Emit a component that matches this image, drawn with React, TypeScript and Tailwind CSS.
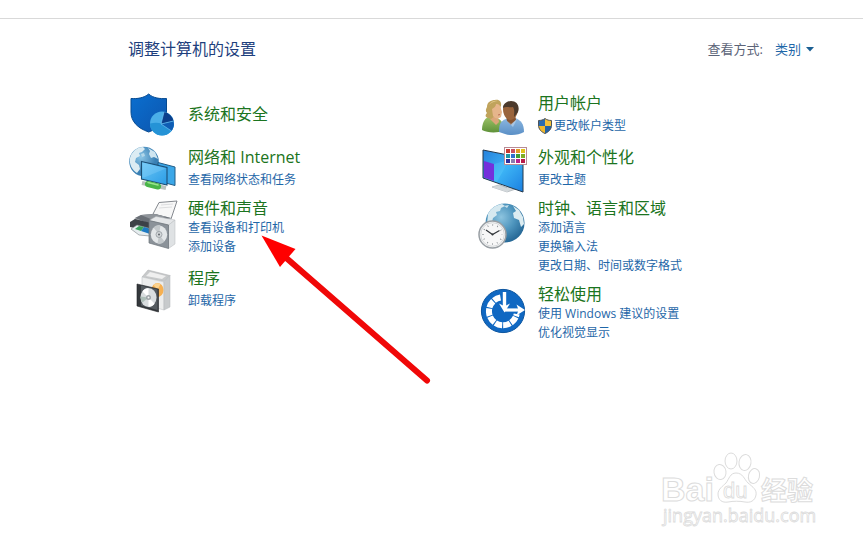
import type { ReactNode } from "react";

type Category = {
  title: string;
  icon: ReactNode;
  links?: { label: string; shield?: boolean }[];
};

const iconClass = "w-12 h-12 shrink-0 overflow-visible";

function SecurityIcon() {
  return (
    <svg viewBox="0 0 48 48" className={iconClass} aria-hidden="true">
      <defs>
        <linearGradient id="shield" x1="0" y1="0" x2="1" y2="1">
          <stop offset="0" stopColor="#0a6fd0" />
          <stop offset="1" stopColor="#0d55ad" />
        </linearGradient>
      </defs>
      <path d="M20.700 4C16 8 9 9 3 8.500V22c0 9 6 16 17.700 20C32 38 38.500 31 38.500 22V8.500C32 9 25 8 20.700 4Z" fill="url(#shield)" stroke="#064a90" />
      <circle cx="34" cy="33.500" r="12" fill="#4aaee8" />
      <path d="M22 33.500a12 12 0 0 0 24 0c-4 2-9 2.500-12 0-4-1-8-1-12 0Z" fill="#2593d6" />
      <path d="M33 34 36 22a12 12 0 0 1 9.500 9Z" fill="#0b3f8c" />
      <path d="M33 34 45.500 31a12 12 0 0 1-2 10Z" fill="#0f5db4" />
      <path d="M33 34 36 22M33 34l12.500-3M33 34l10.500 7" stroke="#6fc5f5" strokeWidth=".7" />
    </svg>
  );
}

function NetworkIcon() {
  return (
    <svg viewBox="0 0 48 48" className={iconClass} aria-hidden="true">
      <defs>
        <radialGradient id="net-globe" cx=".4" cy=".35">
          <stop offset="0" stopColor="#8cc6e6" />
          <stop offset="1" stopColor="#3a80b4" />
        </radialGradient>
        <linearGradient id="net-screen" x1="0" y1="0" x2="1" y2="1">
          <stop offset="0" stopColor="#6cc6f5" />
          <stop offset="1" stopColor="#2a9ce6" />
        </linearGradient>
      </defs>
      <circle cx="16" cy="17.500" r="14.800" fill="url(#net-globe)" />
      <path d="M3 11c3-5 7-8 12-8l2 2-3 3-3 1 1 3-4 2-1 4 4 3 1 4-3 4c-5-3-8-9-7-15Z" fill="#dcecf3" />
      <path d="m20 4 7 4 3 7-4-2-3 1-2-4 1-3Z" fill="#cfe5f0" />
      <path d="m13 10 3-1 1 3-3 1Z" fill="#b2d7e9" />
      <path d="m30 18.500 17 4.500v18.500L30 37Z" fill="#3ba7e8" stroke="#235d87" />
      <path d="m13.500 17.500 25.500 6V41l-25.500-6Z" fill="url(#net-screen)" stroke="#1c4e75" strokeWidth="1.100" />
      <path d="m14.500 18.500 23.500 6-22 9-1.500-.5Z" fill="#a5e1ff" opacity=".25" />
      <path d="m14 39 24 5" stroke="#b9c2bd" strokeWidth="4" />
      <path d="m20 40 10 2.500" stroke="#49b548" strokeWidth="6" strokeLinecap="round" />
      <path d="m20 38.500 10 2.500" stroke="#9be38c" strokeWidth="1.500" strokeLinecap="round" />
    </svg>
  );
}

function HardwareIcon() {
  return (
    <svg viewBox="0 0 48 48" className={iconClass} aria-hidden="true">
      <path d="m25 16 6-11.500L49 3l-6 18Z" fill="#f7f7f7" stroke="#777c82" strokeWidth=".9" />
      <path d="m33 7 12-1M31 10l13-1" stroke="#d4d6d8" strokeWidth=".8" />
      <path d="m7 20 6-3 14-1 16 4-2 10-20 2L2 29Z" fill="#b8bcc0" />
      <path d="m7 20 6-3 14-1 16 4-21 6Z" fill="#6b7077" />
      <path d="m13 17 14-1 12 3-14 3Z" fill="#90959b" />
      <path d="m2 24 5-3 16 4v8L2 29Z" fill="#3c4147" />
      <path d="m3 31 6-4 15 4-2 7-11-1Z" fill="#e6edf0" stroke="#777d82" strokeWidth=".6" />
      <path d="m7 31 4-3 5 1-3 4Z" fill="#3ba45c" />
      <path d="m13 33 3-4 7 2-1 5Z" fill="#1e7bc3" />
      <path d="m21 22.500 7-4 19 3.500-6 5Z" fill="#e4e6e8" stroke="#b5b9bc" strokeWidth=".5" />
      <path d="m40.500 27 6.500-5v24l-6.500 4.500Z" fill="#dfe2e4" stroke="#b6babd" strokeWidth=".5" />
      <path d="m21 22.500 19.500 4.500v23.500L21 45Z" fill="#8b9299" stroke="#6c7379" strokeWidth=".7" />
      <ellipse cx="31" cy="36.500" rx="8.200" ry="9" fill="#e3e6e8" />
      <path d="m31 36.500-5.500-7c2-2 4.500-3 7-2Zm0 0 5.500 7c-2 2-4.500 3-7 2Z" fill="#c3c8cb" />
      <circle cx="31" cy="36.500" r="3" fill="#d3d7d9" stroke="#8c9298" strokeWidth=".7" />
      <circle cx="31" cy="36.500" r="1" fill="#60666b" />
    </svg>
  );
}

function ProgramsIcon() {
  return (
    <svg viewBox="0 0 48 48" className={iconClass} aria-hidden="true">
      <path d="m14 12 6-7 22 5.500-6 6Z" fill="#c7c9ca" stroke="#aaadaf" strokeWidth=".5" />
      <path d="m18 11 4-4 16 4-4 3Z" fill="#efefef" />
      <path d="m14 12 22 5v28l-22-6Z" fill="#eceded" stroke="#c1c4c6" strokeWidth=".6" />
      <path d="m36 17 6-6.500V42l-6 3Z" fill="#c7cacc" stroke="#b1b5b8" strokeWidth=".5" />
      <ellipse cx="29.500" cy="25" rx="6" ry="7" fill="#f6b052" />
      <path d="m29.500 25-4-5c2-2 5-2 7-1Z" fill="#fbd28e" />
      <path d="m9 19 21.500 5v23L9 41Z" fill="#34383c" stroke="#202326" strokeWidth=".6" />
      <path d="m13 20.500 16.500 4V45L13 40.500Z" fill="#555b60" />
      <ellipse cx="20.500" cy="32.500" rx="8" ry="9.500" fill="#d9dddf" />
      <path d="m20.500 32.500-6-6c1-2 4-4 6-3Zm0 0 6 6c-1 2-4 4-6 3Z" fill="#fff" />
      <path d="m20.500 32.500-8-1c0 3 1 5 2 6Z" fill="#aebfb9" />
      <circle cx="20.500" cy="32.500" r="2.500" fill="#9ea4a8" />
      <circle cx="20.500" cy="32.500" r="1" fill="#f5f5f5" />
    </svg>
  );
}

function UsersIcon() {
  return (
    <svg viewBox="0 0 48 48" className={iconClass} aria-hidden="true">
      <defs>
        <linearGradient id="woman" x1="0" y1="0" x2="0" y2="1">
          <stop offset="0" stopColor="#9cc267" />
          <stop offset="1" stopColor="#5f9239" />
        </linearGradient>
        <linearGradient id="man" x1="0" y1="0" x2="0" y2="1">
          <stop offset="0" stopColor="#8cb7e0" />
          <stop offset="1" stopColor="#5a8fc6" />
        </linearGradient>
      </defs>
      <path d="M4 40c0-6 2-11 6-13l8 1c5 1 8 5 8 13-7 2-17 2-22-1Z" fill="url(#woman)" />
      <path d="m12 25 8 2 1 5-3 3-6-6Z" fill="#dba679" />
      <path d="M10 28c-3-1-3-3-1-5-2-2-1-4 0-6 0-5 4-7 8-7 4-1 7 2 6 6l-6 10-4 3Z" fill="#c0a35c" />
      <path d="M14 19c2-1 4-3 4-5 3 0 5 2 5 5l1 3-1 5c-2 2-6 2-8-1Z" fill="#e6b58b" />
      <path d="M11 15c2-4 6-5 9-4-3 0-6 1-9 4Z" fill="#e3cd8f" />
      <path d="m20 25 2-.5" stroke="#b0584a" strokeWidth=".8" />
      <path d="M21 42c0-7 1-11 7-13l9-1c6 2 9 6 9 14-5 3-13 4-19 2Z" fill="url(#man)" />
      <path d="m28 26 9-1 1 5-5 5-4-4Z" fill="#875431" />
      <path d="M25 19c0-4 4-7 8-7 5 0 8 4 7 9-1 5-4 9-8 9-4-1-7-5-7-11Z" fill="#9a643c" />
      <path d="M25 18c0-4 4-7 8-7 6 0 9 5 7 11l-4 5c0-3 1-7-1-10-4 1-7-1-10 1Z" fill="#4c3a2c" />
      <path d="m28 30 5 4 6-5-4 8Z" fill="#c5daf0" opacity=".6" />
    </svg>
  );
}

const swatches = [
  "#c83a31", "#ca5060", "#e49a23", "#e3c11c",
  "#1c96a4", "#2f6fd0", "#3f9c36", "#7fac25",
  "#2c2d9c", "#8d7bb0", "#b72291", "#b81c4a",
];

function AppearanceIcon() {
  return (
    <svg viewBox="0 0 48 48" className={iconClass} aria-hidden="true">
      <defs>
        <linearGradient id="desktop" x1="0" y1="0" x2="1" y2="1">
          <stop offset="0" stopColor="#2680dc" />
          <stop offset=".5" stopColor="#3cb3f5" />
          <stop offset="1" stopColor="#1b7fe0" />
        </linearGradient>
      </defs>
      <path d="m22 38 7 2v4h-7Z" fill="#a4acb2" />
      <path d="m14 43 10-3 14 5-9 3Z" fill="#d3d8db" stroke="#a0a7ac" strokeWidth=".6" />
      <path d="m5 6 40 8v34L5 34Z" fill="url(#desktop)" stroke="#24384b" />
      <path d="m6 17 10 3v17L6 33.500Z" fill="#7430dc" />
      <path d="m16 20 15-4-12 22-3-1Z" fill="#63d0ff" opacity=".3" />
      <path d="m22 40.500 7 2.500v4l-7-2Z" fill="#b4bbc0" />
      <path d="m14 43 8-1.500 10 4-3 2.500Z" fill="#d3d8db" />
      <rect x="26.500" y="3.500" width="22" height="17" fill="#fff" stroke="#b88b95" />
      {swatches.map((color, i) => (
        <rect key={i} x={28 + (i % 4) * 5} y={5 + Math.floor(i / 4) * 5} width="4" height="4" fill={color} />
      ))}
    </svg>
  );
}

function ClockIcon() {
  return (
    <svg viewBox="0 0 48 48" className={iconClass} aria-hidden="true">
      <defs>
        <radialGradient id="world" cx=".4" cy=".35" r=".65">
          <stop offset="0" stopColor="#8dc4df" />
          <stop offset=".55" stopColor="#4d94bd" />
          <stop offset="1" stopColor="#286a98" />
        </radialGradient>
      </defs>
      <circle cx="27" cy="25" r="19.500" fill="url(#world)" />
      <path d="M10 16c3-6 8-9 14-10l3 2-4 2-1 3-4 1 1 3-4 3-1 4-5 2Z" fill="#d6e9f0" />
      <path d="m35 8 6 4 4 7 1 7-3 3-2-7-5-2-1-5 3-2Z" fill="#dcecf1" />
      <path d="m26 8 5-1-2 3Z" fill="#c5e0eb" />
      <circle cx="14.500" cy="36.500" r="13.500" fill="#f7f7f7" stroke="#989ea3" strokeWidth="1.500" />
      <circle cx="14.500" cy="36.500" r="11.800" fill="none" stroke="#d4d7d9" />
      <circle cx="14.500" cy="36.500" r="9.500" fill="none" stroke="#777d82" strokeWidth="1.500" strokeDasharray=".7 4.274" strokeDashoffset=".35" />
      <path d="m8 32 6.500 4.500 7-4" fill="none" stroke="#303438" strokeWidth="1.200" />
      <circle cx="14.500" cy="36.500" r="1" fill="#303438" />
    </svg>
  );
}

function EaseIcon() {
  return (
    <svg viewBox="0 0 48 48" className={iconClass} aria-hidden="true">
      <circle cx="25" cy="27" r="21.600" fill="#1068c2" stroke="#0c559f" />
      <path d="M22.500 13.500A14 14 0 1 0 38.700 30" fill="none" stroke="#fff" strokeWidth="6" strokeDasharray="7.300 1" />
      <path d="M26.500 8v16" stroke="#fff" strokeWidth="3.400" />
      <path d="m21 19.500 4 2h3l4-2-5.500 9Z" fill="#fff" />
      <path d="M26.500 26H42" stroke="#fff" strokeWidth="3.200" />
      <path d="m38.500 20.500 8.500 5.500-8.500 5.500 1.500-4v-3Z" fill="#fff" />
    </svg>
  );
}

function UacShield() {
  return (
    <svg viewBox="0 0 14 16" className="w-3.5 h-4 shrink-0" aria-hidden="true">
      <path d="M7 .5C5 2 3 2.500.5 2.500V8H7Z" fill="#2b6cb0" />
      <path d="M7 .5c2 1.500 4 2 6.500 2V8H7Z" fill="#f3c13a" />
      <path d="M.5 8c.5 4 3 6 6.500 7.500V8Z" fill="#f0b92e" />
      <path d="M13.500 8c-.5 4-3 6-6.500 7.500V8Z" fill="#2463a6" />
      <path d="M7 .5C5 2 3 2.500.5 2.500V7c0 4.500 3 7 6.500 8.500 3.500-1.500 6.500-4 6.500-8.500V2.500C11 2.500 9 2 7 .5Z" fill="none" stroke="#4d5358" />
    </svg>
  );
}

const leftColumn: Category[] = [
  { title: "系统和安全", icon: <SecurityIcon /> },
  { title: "网络和 Internet", icon: <NetworkIcon />, links: [{ label: "查看网络状态和任务" }] },
  { title: "硬件和声音", icon: <HardwareIcon />, links: [{ label: "查看设备和打印机" }, { label: "添加设备" }] },
  { title: "程序", icon: <ProgramsIcon />, links: [{ label: "卸载程序" }] },
];

const rightColumn: Category[] = [
  { title: "用户帐户", icon: <UsersIcon />, links: [{ label: "更改帐户类型", shield: true }] },
  { title: "外观和个性化", icon: <AppearanceIcon />, links: [{ label: "更改主题" }] },
  {
    title: "时钟、语言和区域",
    icon: <ClockIcon />,
    links: [{ label: "添加语言" }, { label: "更换输入法" }, { label: "更改日期、时间或数字格式" }],
  },
  { title: "轻松使用", icon: <EaseIcon />, links: [{ label: "使用 Windows 建议的设置" }, { label: "优化视觉显示" }] },
];

function CategoryItem({ title, icon, links = [] }: Category) {
  return (
    <li className={links.length > 1 ? "flex gap-3 pb-[3px]" : "flex gap-3"}>
      {icon}
      <div className="flex flex-col justify-evenly min-h-12">
        <h2 className="text-base leading-5">
          <a href="#" className="text-[#1b7420] hover:underline">{title}</a>
        </h2>
        {links.length > 0 && (
          <ul>
            {links.map((link) => (
              <li key={link.label} className="flex items-center h-[19px] text-xs">
                <a href="#" className="flex items-center gap-0.5 text-[#1f67a8] hover:underline">
                  {link.shield && <UacShield />}
                  {link.label}
                </a>
              </li>
            ))}
          </ul>
        )}
      </div>
    </li>
  );
}

function CategoryList({ items }: { items: Category[] }) {
  return (
    <ul className="flex flex-col gap-1.5">
      {items.map((item) => (
        <CategoryItem key={item.title} {...item} />
      ))}
    </ul>
  );
}

function Pointer() {
  return (
    <svg viewBox="0 0 174 154" className="absolute left-[260px] top-[234px] w-[174px] h-[154px] pointer-events-none" aria-hidden="true">
      <path d="M24 22 167 146.500" stroke="#f00808" strokeWidth="6" strokeLinecap="round" />
      <path d="M1.500 1.500 35.500 15 20 33Z" fill="#ff0000" />
    </svg>
  );
}

function Watermark() {
  return (
    <svg
      viewBox="0 0 180 100"
      className="absolute right-[33px] bottom-[6px] w-[180px] h-[100px] pointer-events-none font-['Liberation_Sans','Noto_Sans_CJK_SC',sans-serif]"
      fill="#fff"
      stroke="#dcdcdc"
      strokeWidth="1"
      aria-hidden="true"
    >
      <text x="11" y="61" fontSize="34" fontWeight="700">Bai</text>
      <ellipse cx="70" cy="32" rx="6" ry="7.500" transform="rotate(-8 70 32)" />
      <ellipse cx="81" cy="21" rx="6" ry="8" />
      <ellipse cx="95" cy="22.500" rx="6" ry="8" transform="rotate(10 95 22.500)" />
      <ellipse cx="104" cy="36" rx="5.500" ry="7.500" transform="rotate(14 104 36)" />
      <path d="M86 33c7 0 8 6 12 10 5 4 9 7 8 12-1 6-6 8-11 7-5-1-12-1-17 0-6 1-10-2-10-8 0-5 5-8 8-11 3-4 4-10 10-10Z" />
      <text x="73" y="58" fontSize="22" strokeWidth=".8">du</text>
      <text x="111" y="60" fontSize="26" fontWeight="700">经验</text>
      <text x="13" y="82" fontSize="18" strokeWidth=".8" className="font-['Open_Sans',sans-serif]">jingyan.baidu.com</text>
    </svg>
  );
}

export default function App() {
  return (
    <div className="relative min-h-screen bg-white overflow-hidden font-['Open_Sans','Noto_Sans_CJK_SC',sans-serif]">
      <div className="h-[19px] border-b border-[#d9d9d9]" />
      <main className="pt-5 pl-32 pr-[49px]">
        <header className="flex items-center justify-between">
          <h1 className="text-base leading-5 text-[#1e3f7d]">调整计算机的设置</h1>
          <div className="flex items-center text-[13px] leading-5">
            <label htmlFor="view-mode" className="text-[#5c6478]">查看方式:</label>
            <select id="view-mode" className="appearance-none ml-3 bg-transparent text-[#1f67a8]">
              <option>类别</option>
            </select>
            <svg viewBox="0 0 8 5" className="w-2 h-[5px] ml-1" aria-hidden="true">
              <path d="M0 0h8L4 4.500Z" fill="#1b5f93" />
            </svg>
          </div>
        </header>
        <div className="grid grid-cols-2 gap-x-[14px] mt-[31px]">
          <CategoryList items={leftColumn} />
          <CategoryList items={rightColumn} />
        </div>
      </main>
      <Pointer />
      <Watermark />
    </div>
  );
}
